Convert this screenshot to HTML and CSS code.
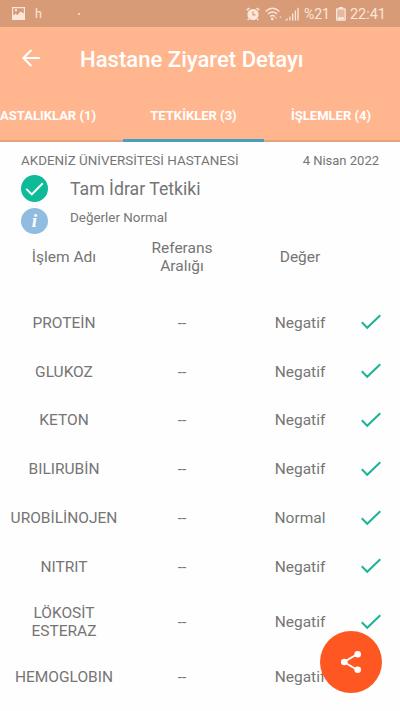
FILE: index.html
```
<!DOCTYPE html>
<html lang="tr">
<head>
    <meta charset="UTF-8">
    <meta name="viewport" content="width=device-width, initial-scale=1.0">
    <title>Hastane Ziyaret Detayı</title>
    <link rel="stylesheet" href="styles.css">
</head>
<body>
    <div class="screen">
        <div class="status-bar">
            <svg class="picture-icon" width="13" height="13" viewBox="0 0 13 13">
                <path fill="currentColor" fill-rule="evenodd" d="M0 0h13v13H0zM1.2 1.2v7.3l2.3-1.7 2 1.2 3-3.5 3.3 2V1.2zM3 2.3h2v2H3z"/>
            </svg>
            <span class="notice">h</span>
            <span class="dot"></span>
            <div class="status-right">
                <svg width="14" height="14" viewBox="0 0 14 14">
                    <circle cx="7" cy="7.5" r="5.6" fill="currentColor"/>
                    <path d="M.8 3.2 3.4 1M13.2 3.2 10.6 1M2.8 11.8 1.8 13M11.2 11.8l1 1.2" stroke="currentColor" stroke-width="1.6" fill="none"/>
                    <path d="M7 4.5v3.4h2.6" stroke="#d89b77" stroke-width="1.2" fill="none"/>
                </svg>
                <svg class="wifi-icon" width="18" height="14" viewBox="0 0 18 14">
                    <g fill="none" stroke="currentColor" stroke-width="1.4">
                        <path d="M.6 4.5Q7.5-1.8 14.4 4.5M2.9 7.1q4.6-4.1 9.2 0M5.1 9.5q2.4-2.2 4.8 0"/>
                    </g>
                    <circle cx="7.3" cy="11.9" r="1.3" fill="currentColor"/>
                    <path d="m9.5 11.5 1.5-2 1.5 2zM14 9.5h3l-1.5 2z" fill="currentColor" opacity=".6"/>
                </svg>
                <svg class="signal-icon" width="14" height="14" viewBox="0 0 14 14">
                    <path d="M0 13.5 2.6 11v2.5zM4.3 9.5h1.3v4H4.3zM7 6.5h1.4v7H7zM9.8 3.5h1.3v10H9.8zM12.4.8h1.3v12.7h-1.3z" fill="currentColor"/>
                </svg>
                <span class="percent">%21</span>
                <svg class="battery-icon" width="10" height="14" viewBox="0 0 10 14">
                    <path d="M3 0h4v2H3z" fill="currentColor"/>
                    <rect x=".6" y="1.8" width="8.6" height="11.4" rx=".5" fill="currentColor" fill-opacity=".4" stroke="currentColor" stroke-width="1.2"/>
                    <path d="M2 10.2h6v2.4H2z" fill="currentColor"/>
                </svg>
                <span class="clock">22:41</span>
            </div>
        </div>

        <header class="app-bar">
            <svg class="back" width="18" height="18" viewBox="0 0 18 18">
                <path d="M17.8 9H1.6M9.4 1 1.4 9l8 8" fill="none" stroke="currentColor" stroke-width="2"/>
            </svg>
            <h1>Hastane Ziyaret Detayı</h1>
        </header>

        <nav class="tabs">
            <div class="tab tab-first"><span>HASTALIKLAR (1)</span></div>
            <div class="tab active"><span>TETKİKLER (3)</span></div>
            <div class="tab tab-last"><span>İŞLEMLER (4)</span></div>
        </nav>

        <main>
            <div class="visit">
                <span class="hospital">AKDENİZ ÜNİVERSİTESİ HASTANESİ</span>
                <span class="date">4 Nisan 2022</span>
            </div>
            <div class="test">
                <svg width="27" height="27" viewBox="0 0 27 27">
                    <circle cx="13.5" cy="13.5" r="13.5" fill="#0fba98"/>
                    <path d="m5.2 13.9 5.6 5.5L21.8 8.3" fill="none" stroke="#fff" stroke-width="2"/>
                </svg>
                <span>Tam İdrar Tetkiki</span>
            </div>
            <div class="summary">
                <span class="info">i</span>
                <span>Değerler Normal</span>
            </div>

            <div class="results">
                <div class="row head">
                    <span>İşlem Adı</span>
                    <span>Referans<br>Aralığı</span>
                    <span>Değer</span>
                </div>
                <div class="row">
                    <span>PROTEİN</span><span>--</span><span>Negatif</span>
                    <svg class="check" viewBox="0 0 20 16"><path d="m.8 8.3 5.4 5.5L19.3 1.2"/></svg>
                </div>
                <div class="row">
                    <span>GLUKOZ</span><span>--</span><span>Negatif</span>
                    <svg class="check" viewBox="0 0 20 16"><path d="m.8 8.3 5.4 5.5L19.3 1.2"/></svg>
                </div>
                <div class="row">
                    <span>KETON</span><span>--</span><span>Negatif</span>
                    <svg class="check" viewBox="0 0 20 16"><path d="m.8 8.3 5.4 5.5L19.3 1.2"/></svg>
                </div>
                <div class="row">
                    <span>BILIRUBİN</span><span>--</span><span>Negatif</span>
                    <svg class="check" viewBox="0 0 20 16"><path d="m.8 8.3 5.4 5.5L19.3 1.2"/></svg>
                </div>
                <div class="row">
                    <span>UROBİLİNOJEN</span><span>--</span><span>Normal</span>
                    <svg class="check" viewBox="0 0 20 16"><path d="m.8 8.3 5.4 5.5L19.3 1.2"/></svg>
                </div>
                <div class="row">
                    <span>NITRIT</span><span>--</span><span>Negatif</span>
                    <svg class="check" viewBox="0 0 20 16"><path d="m.8 8.3 5.4 5.5L19.3 1.2"/></svg>
                </div>
                <div class="row tall">
                    <span>LÖKOSİT<br>ESTERAZ</span><span>--</span><span>Negatif</span>
                    <svg class="check" viewBox="0 0 20 16"><path d="m.8 8.3 5.4 5.5L19.3 1.2"/></svg>
                </div>
                <div class="row">
                    <span>HEMOGLOBIN</span><span>--</span><span>Negatif</span>
                </div>
            </div>
        </main>

        <button class="share" type="button" aria-label="Paylaş">
            <svg width="22" height="24" viewBox="0 0 22 24">
                <path d="M17.5 4 4 12l13.5 8" fill="none" stroke="#fff" stroke-width="2"/>
                <g fill="#fff">
                    <circle cx="17.7" cy="4.2" r="3.3"/>
                    <circle cx="4.3" cy="12" r="3.3"/>
                    <circle cx="17.7" cy="19.8" r="3.3"/>
                </g>
            </svg>
        </button>
    </div>
</body>
</html>
```
FILE: styles.css
```
body {
    margin: 0;
    font-family: Roboto, sans-serif;
    color: #757575;
    background-color: #fefefe;
}

.screen {
    position: relative;
    width: 400px;
    height: 711px;
    overflow: hidden;
}

.status-bar {
    display: flex;
    align-items: center;
    box-sizing: border-box;
    height: 27px;
    padding: 0 14px 0 12px;
    background-color: #d89b77;
    color: #fbe6da;
}

.notice {
    margin-left: 10px;
    font-size: 12.5px;
}

.dot {
    width: 2px;
    height: 2px;
    margin-left: 36px;
    border-radius: 50%;
    background-color: #fbe6da;
}

.status-right {
    display: flex;
    align-items: center;
    margin-left: auto;
}

.wifi-icon {
    margin-left: 5px;
}

.signal-icon {
    margin-left: 2px;
}

.percent {
    margin-left: 5px;
    font-size: 14px;
}

.battery-icon {
    margin-left: 6px;
}

.clock {
    margin-left: 4px;
    padding-top: 1px;
    font-size: 14.5px;
}

.app-bar {
    display: flex;
    align-items: center;
    height: 64px;
    padding-left: 22px;
    background-color: #ffb68e;
    color: #fff;
}

.back {
    margin-top: -2px;
}

.app-bar h1 {
    margin: 0 0 0 40px;
    font-size: 22.1px;
    font-weight: 500;
    white-space: nowrap;
}

.tabs {
    display: grid;
    grid-template-columns: 123px 141px 136px;
    height: 51px;
    background-color: #ffb68e;
    color: #fff;
    font-size: 13px;
    font-weight: 700;
}

.tab {
    display: flex;
    align-items: center;
    justify-content: center;
    border-bottom: 2px solid #e3a17e;
    white-space: nowrap;
}

.tab-first {
    justify-content: flex-end;
    padding-right: 27px;
}

.tab-last {
    justify-content: flex-start;
    padding-left: 27px;
}

.active {
    border-bottom: 3px solid #489fbd;
}

.visit {
    display: flex;
    justify-content: space-between;
    align-items: center;
    height: 33px;
    padding: 4px 21px 0;
    box-sizing: border-box;
    font-size: 13px;
}

.hospital {
    font-size: 13.4px;
}

.test,
.summary {
    display: flex;
    align-items: center;
    padding-left: 21px;
}

.test {
    height: 27px;
    font-size: 17.7px;
}

.test span {
    margin-left: 22px;
}

.summary {
    height: 27px;
    padding-top: 5px;
    font-size: 13.4px;
}

.summary span + span {
    margin: -6px 0 0 22px;
}

.info {
    width: 27px;
    height: 26px;
    border-radius: 50%;
    background-color: #8fbce0;
    color: #fff;
    font: italic bold 19px/26px "Liberation Serif", serif;
    text-align: center;
}

.results {
    font-size: 15.5px;
    line-height: 18.5px;
}

.row {
    display: grid;
    grid-template-columns: 118px 118px 118px 20px;
    align-items: center;
    height: 48.8px;
    padding-left: 5px;
    text-align: center;
}

.head {
    height: 46px;
    margin-bottom: 18.6px;
}

.tall {
    height: 61.6px;
}

.check {
    width: 20px;
    height: 16px;
    margin: -1px 0 0 2px;
    fill: none;
    stroke: #1eb394;
    stroke-width: 2;
}

.share {
    position: absolute;
    left: 320px;
    top: 631px;
    display: flex;
    align-items: center;
    justify-content: center;
    width: 62px;
    height: 62px;
    padding: 0;
    border: none;
    border-radius: 50%;
    background-color: #fe5722;
    cursor: pointer;
}
```
